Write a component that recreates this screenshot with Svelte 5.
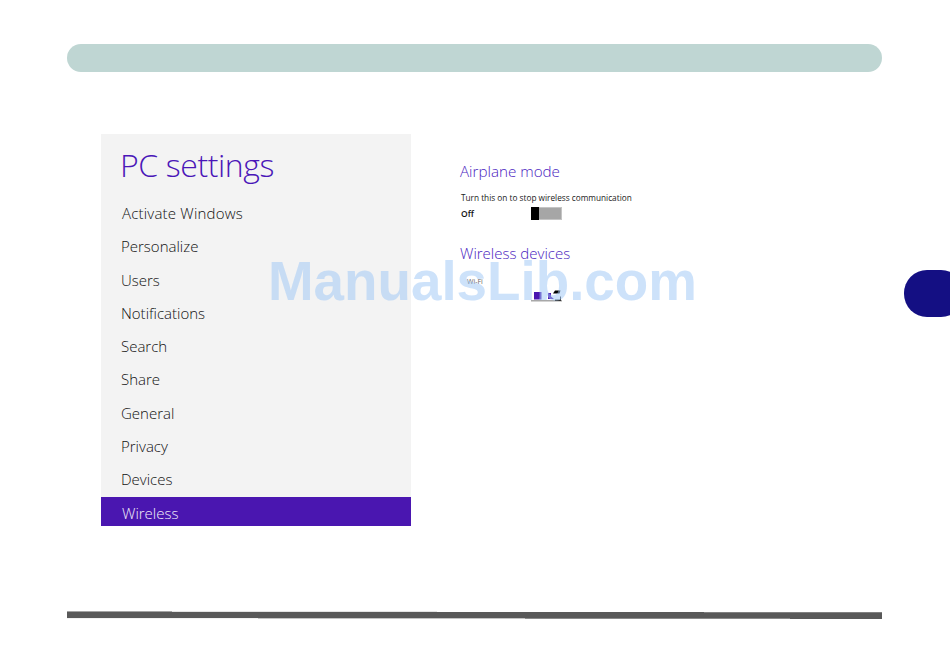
<script>
  let items = ["Activate Windows", "Personalize", "Users", "Notifications", "Search", "Share", "General", "Privacy", "Devices", "Wireless"];
  let active = "Wireless";

  // uneven edges of the footer rule: [left, width, row, colour]
  let strips = [
    [0, 105, -1, "#a3a3a3"],
    [105, 265, -1, "#e4e4e4"],
    [637, 178, 0, "#808080"],
    [0, 191, 6, "#f2f2f2"],
    [191, 267, 6, "#c4c4c4"],
    [458, 265, 6, "#8a8a8a"]
  ];
</script>

<div class="page">
  <div class="top-bar"></div>

  <div class="content">
    <div class="sidebar">
      <h1 class="title">PC settings</h1>
      <ul class="menu">
        {#each items as item, i}
          <li class="menu-item" class:active={item === active} class:first={i === 0}>{item}</li>
        {/each}
      </ul>
    </div>

    <div class="settings">
      <h2 class="heading">Airplane mode</h2>
      <p class="desc">Turn this on to stop wireless communication</p>
      <div class="row">
        <span class="state">Off</span>
        <div class="switch"><div class="thumb"></div></div>
      </div>

      <h2 class="heading second">Wireless devices</h2>
      <div class="wifi">Wi-Fi</div>
      <svg class="switch-on" width="31" height="14" viewBox="0 0 31 14">
        <rect x="0" y="11" width="31" height="1.5" fill="#a8a8a8" />
        <rect x="3" y="3" width="7.5" height="7.5" fill="#4a16b0" />
        <path d="M17 4h3v3.5l3 2.5h-6z" fill="#4a16b0" />
        <path d="M22 4.5l2-3h5.5l-1 3z" fill="#000" />
        <path d="M24 10.5h5v-3h1v4.5h-6z" fill="#333" />
      </svg>
    </div>
  </div>

  <div class="bottom-bar">
    {#each strips as s}
      <div class="strip" style="left:{s[0]}px;width:{s[1]}px;top:{s[2]}px;background:{s[3]}"></div>
    {/each}
  </div>

  <div class="side-tab"></div>
  <div class="watermark">ManualsLib.com</div>
</div>

<style>
  :global(body) {
    background: #fff;
  }

  .page {
    position: relative;
    width: 950px;
    height: 669px;
    overflow: hidden;
    padding: 44px 68px 0 67px;
    box-sizing: border-box;
    font-family: "Open Sans", "Noto Sans", sans-serif;
  }

  .top-bar {
    height: 28px;
    background: #bfd6d3;
    border-radius: 14px;
  }

  /* Main area */
  .content {
    display: flex;
    margin: 62px 0 0 34px;
    height: 392px;
  }

  .sidebar {
    width: 310px;
    background: #f3f3f3;
    overflow: hidden;
  }

  .title {
    margin: 9px 0 0 19px;
    font-size: 32px;
    line-height: 44px;
    font-weight: 300;
    color: #4a16b8;
    letter-spacing: -0.4px;
  }

  .menu {
    list-style: none;
    margin: 10px 0 0;
    padding: 0;
  }

  .menu-item {
    height: 33.3px;
    line-height: 33.3px;
    padding-left: 20px;
    font-size: 15px;
    font-weight: 300;
    color: #111;
  }

  .menu-item.first {
    padding-left: 21px;
    letter-spacing: 0.2px;
  }

  .menu-item.active {
    background: #4a16b0;
    color: #f3effa;
    padding-left: 21px;
  }

  .settings {
    margin: 27px 0 0 49px;
  }

  .heading {
    margin: 0;
    font-size: 15.2px;
    line-height: 20px;
    font-weight: 300;
    color: #4a1cc0;
  }

  .heading.second {
    margin-top: 23px;
    font-size: 15px;
  }

  .desc {
    margin: 11px 0 0 1px;
    font-size: 8.25px;
    line-height: 12px;
    color: #222;
  }

  .row {
    display: flex;
    align-items: center;
    margin: 2px 0 0 1px;
    height: 14px;
  }

  .state {
    width: 70px;
    font-size: 8.5px;
    font-weight: 600;
    color: #111;
  }

  .switch {
    display: flex;
    box-sizing: border-box;
    width: 31px;
    height: 13px;
    background: #a6a6a6;
    border: 1px solid #c4c4c4;
    border-left: 0;
  }

  .thumb {
    width: 8px;
    margin-top: -1px;
    margin-bottom: -1px;
    background: #000;
  }

  .wifi {
    margin: 14px 0 0 7px;
    font-size: 7px;
    line-height: 10px;
    color: #666;
  }

  .switch-on {
    display: block;
    margin: 2px 0 0 71px;
  }

  /* Footer rule */
  .bottom-bar {
    position: relative;
    margin-top: 86px;
    height: 7px;
    background: #595959;
  }

  .strip {
    position: absolute;
    height: 1px;
  }

  .side-tab {
    position: absolute;
    left: 904px;
    top: 270px;
    width: 60px;
    height: 47px;
    border-radius: 23px;
    background: #140f83;
  }

  .watermark {
    position: absolute;
    left: 268px;
    top: 248px;
    font-family: "Liberation Sans", Arial, sans-serif;
    font-size: 54.75px;
    line-height: 66px;
    font-weight: 700;
    color: rgba(160, 200, 245, 0.52);
    white-space: nowrap;
  }
</style>
